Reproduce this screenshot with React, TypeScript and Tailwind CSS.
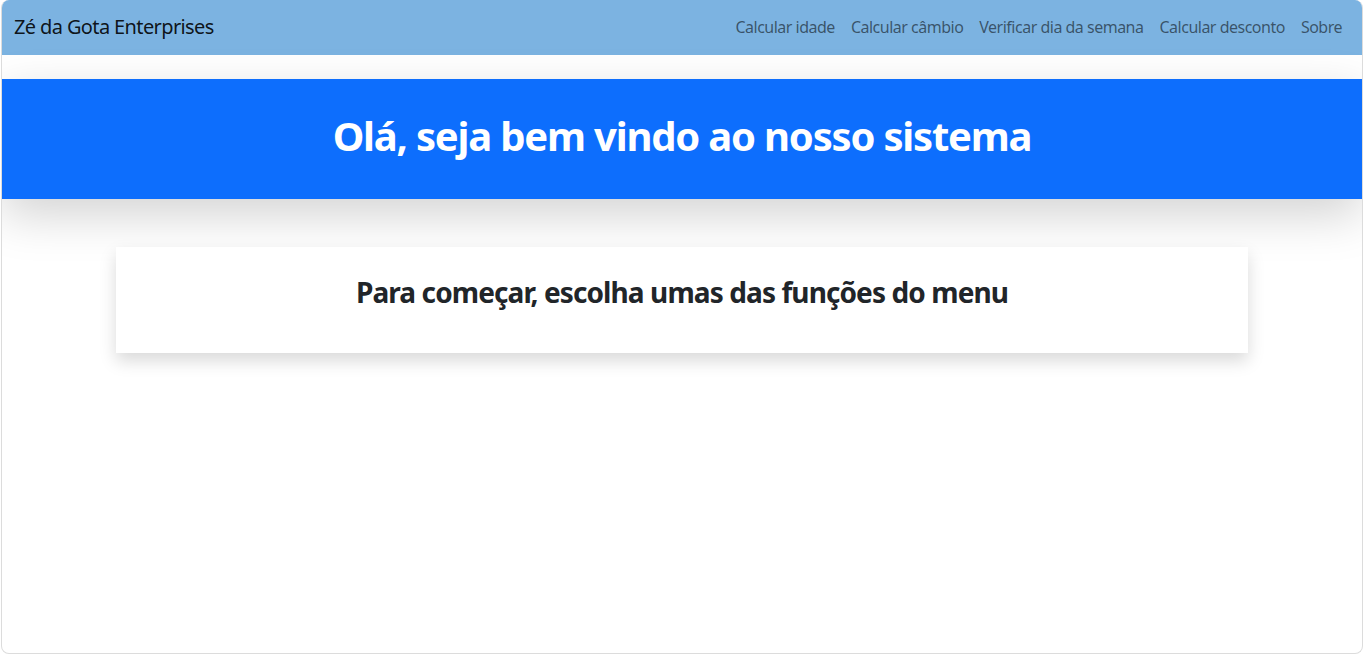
import type React from "react";

const links = [
  "Calcular idade",
  "Calcular câmbio",
  "Verificar dia da semana",
  "Calcular desconto",
  "Sobre",
];

const Navbar: React.FC = () => {
  return (
    <nav className="flex items-center justify-between h-[55px] bg-[#7cb3e1] px-3 pb-0.5">
      <a href="#" className="text-[20px] text-black/90 leading-none tracking-[-0.62px]">
        Zé da Gota Enterprises
      </a>
      <ul className="flex items-center">
        {links.map((link) => (
          <li key={link}>
            <a href="#" className="block px-2 text-[16px] text-black/55 tracking-[-0.5px]">
              {link}
            </a>
          </li>
        ))}
      </ul>
    </nav>
  );
};

export default function App() {
  return (
    <div
      className="h-[656px] w-full bg-white overflow-hidden"
      style={{ fontFamily: '"Noto Sans", "Open Sans", sans-serif' }}
    >
      <div className="ml-px h-[654px] w-[1362px] rounded-lg border border-t-0 border-[#dcdcdc] overflow-hidden bg-white">
        <Navbar />

        {/* Banner */}
        <div className="mt-6 h-[120px] pb-1.5 bg-[#0d6efd] flex items-center justify-center shadow-[0_1rem_3rem_rgba(0,0,0,0.175)]">
          <h1 className="text-[40px] font-bold text-white leading-[1.2] tracking-[-1.2px]">
            Olá, seja bem vindo ao nosso sistema
          </h1>
        </div>

        {/* Card */}
        <div className="mt-12 mx-auto w-[1132px] bg-white pt-[29px] pb-[35px] px-8 shadow-[0_0.5rem_1rem_rgba(0,0,0,0.15)]">
          <h3 className="mb-2 text-center text-[28px] font-bold leading-[1.2] text-[#212529] tracking-[-0.9px]">
            Para começar, escolha umas das funções do menu
          </h3>
        </div>
      </div>
    </div>
  );
}
